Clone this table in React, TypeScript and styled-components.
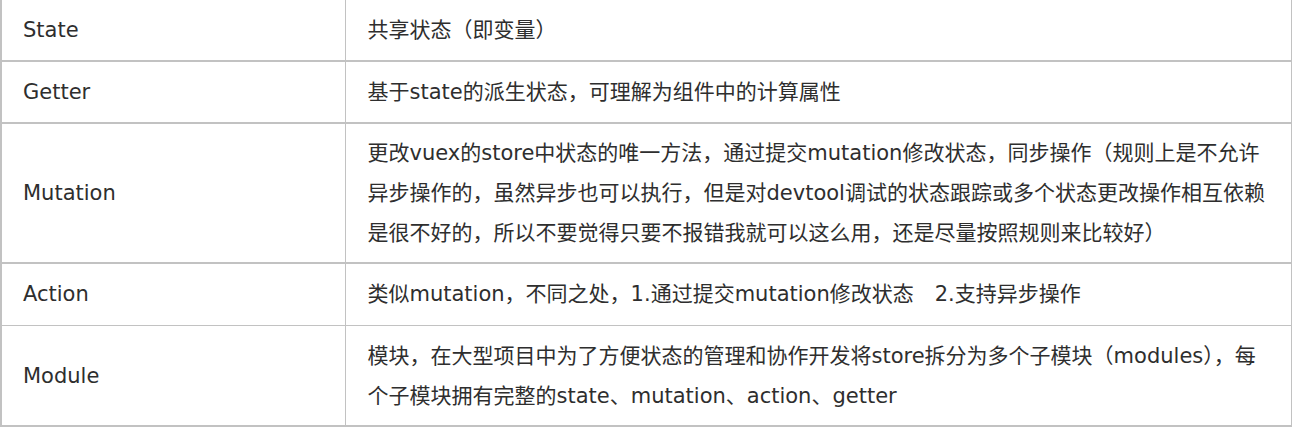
import styled, { createGlobalStyle } from 'styled-components'

const GlobalStyle = createGlobalStyle`
  html, body {
    margin: 0;
    padding: 0;
    background: #ffffff;
  }
`

type Row = {
  name: string
  desc: string
}

const rows: Row[] = [
  { name: 'State', desc: '共享状态（即变量）' },
  { name: 'Getter', desc: '基于state的派生状态，可理解为组件中的计算属性' },
  {
    name: 'Mutation',
    desc: '更改vuex的store中状态的唯一方法，通过提交mutation修改状态，同步操作（规则上是不允许异步操作的，虽然异步也可以执行，但是对devtool调试的状态跟踪或多个状态更改操作相互依赖是很不好的，所以不要觉得只要不报错我就可以这么用，还是尽量按照规则来比较好）',
  },
  { name: 'Action', desc: '类似mutation，不同之处，1.通过提交mutation修改状态\u30002.支持异步操作' },
  {
    name: 'Module',
    desc: '模块，在大型项目中为了方便状态的管理和协作开发将store拆分为多个子模块（modules），每个子模块拥有完整的state、mutation、action、getter',
  },
]

export default function App() {
  return (
    <>
      <GlobalStyle />
      <Table>
        <colgroup>
          <col style={{ width: 344 }} />
          <col />
        </colgroup>
        <tbody>
          {rows.map((r) => (
            <tr key={r.name}>
              <NameCell>{r.name}</NameCell>
              <DescCell>{r.desc}</DescCell>
            </tr>
          ))}
        </tbody>
      </Table>
    </>
  )
}

const Table = styled.table`
  width: 1292px;
  table-layout: fixed;
  border-collapse: collapse;
  font-family: 'DejaVu Sans', 'Noto Sans CJK SC', sans-serif;
  font-size: 21px;
  line-height: 40px;
  color: #2e2e2e;
  border-left: 2px solid #c2c2c2;
  border-right: 1px solid #c2c2c2;
  tr {
    border-bottom: 2px solid #c2c2c2;
  }
  tr:nth-child(n + 4) {
    border-bottom-width: 1px;
  }
  tr:last-child {
    border-bottom-width: 2px;
  }
  tr:nth-child(4) td {
    padding-top: 10px;
    padding-bottom: 11px;
  }
  tr:last-child td {
    padding-top: 10px;
    padding-bottom: 9px;
  }
`

const NameCell = styled.td`
  padding: 10px 21px;
  vertical-align: middle;
  border-right: 1px solid #c2c2c2;
`

const DescCell = styled.td`
  padding: 9px 21px 9px 22px;
  vertical-align: middle;
  white-space: pre-wrap;
`
